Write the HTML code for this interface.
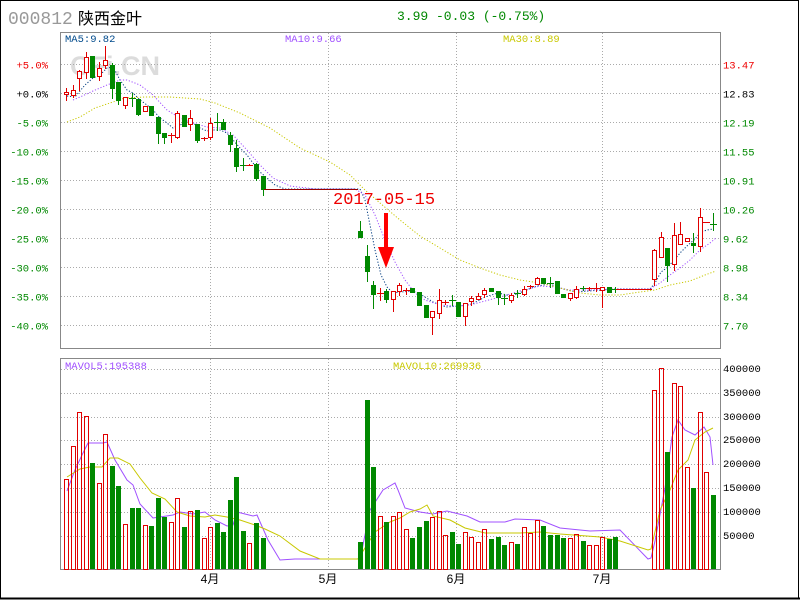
<!DOCTYPE html>
<html><head><meta charset="utf-8"><style>
html,body{margin:0;padding:0;background:#fff;}
#w{position:relative;width:800px;height:600px;overflow:hidden;}
svg{position:absolute;left:0;top:0;}
</style></head><body><div id="w">
<svg id="s" width="800" height="600" xmlns="http://www.w3.org/2000/svg" font-family="Liberation Mono, monospace" shape-rendering="crispEdges">
<rect x="0.5" y="0.5" width="798" height="598" fill="#fff" stroke="#000" stroke-width="1"/>
<line x1="0" y1="598.5" x2="800" y2="598.5" stroke="#000" stroke-width="2"/>
<text x="8" y="24" font-size="18" fill="#999">000812</text>
<text x="78" y="24" font-size="16" fill="#000" font-family="Liberation Sans, Noto Sans CJK SC, sans-serif">陕西金叶</text>
<text x="397" y="20" font-size="13" fill="#008800">3.99 -0.03 (-0.75%)</text>
<text x="70" y="75" font-size="27" font-weight="bold" fill="#dcdcdc" font-family="Liberation Sans, sans-serif">CFi.CN</text>
<g id="grid" stroke="#aaa" stroke-dasharray="1,2" stroke-width="1"></g>
<rect x="60.5" y="32.5" width="660" height="316" fill="none" stroke="#888"/>
<rect x="60.5" y="358.5" width="660" height="211" fill="none" stroke="#888"/>
<g id="lab" font-size="10.5"></g>
<text x="65" y="42" font-size="10.5" fill="#004a8c">MA5:9.82</text>
<text x="285" y="42" font-size="10.5" fill="#a050ff">MA10:9.66</text>
<text x="503" y="42" font-size="10.5" fill="#c8c800">MA30:8.89</text>
<text x="65" y="369" font-size="10.5" fill="#a050ff">MAVOL5:195388</text>
<text x="393" y="369" font-size="10.5" fill="#c8c800">MAVOL10:269936</text>
<g font-size="12" fill="#000" font-family="Liberation Sans, Noto Sans CJK SC, sans-serif" text-anchor="middle">
<text x="210" y="583">4月</text><text x="328" y="583">5月</text><text x="456" y="583">6月</text><text x="602" y="583">7月</text></g>
<g id="ma" fill="none" shape-rendering="auto"></g>
<g id="c"></g>
<line x1="264" y1="189.5" x2="358" y2="189.5" stroke="#900"/>
<line x1="616" y1="289.5" x2="652" y2="289.5" stroke="#d00"/>
<text x="333" y="204" font-size="17" fill="#e00" font-family="Liberation Mono, monospace">2017-05-15</text>
<rect x="384" y="213" width="4" height="36" fill="#f00"/>
<polygon points="378,247 394,247 386,268" fill="#f00" shape-rendering="auto"/>
</svg></div>
<script>
var NS="http://www.w3.org/2000/svg";
function el(p,t,a){var e=document.createElementNS(NS,t);for(var k in a)e.setAttribute(k,a[k]);document.getElementById(p).appendChild(e);return e;}
function tx(p,x,y,s,c,anc){var e=el(p,'text',{x:x,y:y,fill:c});if(anc)e.setAttribute('text-anchor',anc);e.textContent=s;}
for(var i=0;i<10;i++){var y=64.5+29*i;el('grid','line',{x1:61,y1:y,x2:720,y2:y});}
[369.5,393.5,417.5,440.5,464.5,488.5,512.5,536.5].forEach(function(y){el('grid','line',{x1:61,y1:y,x2:720,y2:y});});
[210.5,328.5,456.5,602.5].forEach(function(x){el('grid','line',{x1:x,y1:33,x2:x,y2:348});el('grid','line',{x1:x,y1:359,x2:x,y2:569});});
var pl=['+5.0%','+0.0%','-5.0%','-10.0%','-15.0%','-20.0%','-25.0%','-30.0%','-35.0%','-40.0%'];
var pr=['13.47','12.83','12.19','11.55','10.91','10.26','9.62','8.98','8.34','7.70'];
for(i=0;i<10;i++){var y=68.5+29*i;var c=i==0?'#e00':(i==1?'#000':'#008800');tx('lab',48,y,pl[i],c,'end');tx('lab',723,y,pr[i],c);}
var vl=['400000','350000','300000','250000','200000','150000','100000','50000'];
[372,396,420,443,467,491,515,539].forEach(function(y,i){tx('lab',723,y,vl[i],'#000');});
var R='#e00000',G='#008800';
var s1=[['r',92,94,88,100],['r',90,95,85,97],['r',71,78,70,90],['r',57,72,52,78],['g',56,77,56,77],['r',68,76,62,80],['r',60,65,46,68],['g',65,88,63,98],['g',82,100,82,104],['r',97,105,97,108],['g',98,99,93,106],['g',99,114,99,115],['r',106,111,106,111],['g',106,115,106,115],['g',117,133,117,143],['g',133,137,133,143],['r',135,136,133,142],['r',113,137,111,138],['g',115,126,115,126],['r',118,124,110,130],['g',124,140,124,142],['r',138,139,137,140],['r',123,137,118,139],['g',122,123,113,130],['g',122,129,119,129],['g',135,144,132,151],['g',148,166,140,171],['g',165,166,158,170],['r',165,166,164,166],['g',164,178,163,180],['g',176,189,176,195]];
var v1=[479,446,412,416,463,483,434,466,486,524,508,508,525,526,498,517,522,498,527,511,510,538,527,523,532,500,477,531,543,523,538];
var s2=[['g',231,237,221,237],['g',256,271,245,281],['g',285,294,281,308],['r',293,294,288,300],['g',291,299,289,302],['r',291,299,291,311],['r',285,291,283,295],['r',290,291,288,294],['g',288,292,288,292],['g',292,305,292,305],['g',305,317,305,317],['r',311,317,311,334],['r',300,313,289,318],['r',302,303,300,304],['g',300,301,295,305],['g',302,316,302,316],['r',303,316,303,325],['r',298,301,296,305],['r',296,299,293,299],['r',290,294,288,297],['g',288,291,288,291],['g',291,297,291,304],['g',298,299,294,304],['r',295,300,293,302],['g',293,294,290,297],['r',289,294,286,295],['r',286,287,285,288],['r',278,284,277,284],['g',278,283,278,283],['g',283,284,277,287],['g',281,293,281,293],['g',294,297,294,297],['r',293,298,293,300],['r',289,297,286,298],['g',288,289,286,290],['r',288,289,287,290],['r',288,289,283,291],['r',287,290,287,307],['g',287,292,287,292],['g',289,290,287,292]];
var v2=[542,400,467,516,522,516,512,529,538,527,521,517,511,535,532,544,532,537,542,529,539,537,545,542,544,527,533,520,526,535,535,538,538,534,541,545,545,537,539,537];
var s3=[['r',250,279,249,285],['r',237,257,232,257],['g',248,265,248,281],['r',235,264,223,270],['r',234,244,222,244],['r',238,241,238,241],['g',243,245,233,252],['r',217,246,208,251],['r',222,223,222,223],['g',224,225,213,230]];
var v3=[390,368,452,383,386,467,488,412,472,495];
function seg(st,S,V){for(var i=0;i<S.length;i++){var x=Math.round(st+6.55*i),d=S[i],col=d[0]=='r'?R:G;
 if(d[3]<d[1])el('c','line',{x1:x+2.5,y1:d[3],x2:x+2.5,y2:d[1],stroke:col});
 if(d[4]>d[2])el('c','line',{x1:x+2.5,y1:d[2],x2:x+2.5,y2:d[4]+1,stroke:col});
 if(d[2]-d[1]<=1){el('c','line',{x1:x-1,y1:d[1]+0.5,x2:x+6,y2:d[1]+0.5,stroke:col});}
 else if(d[0]=='r'){el('c','rect',{x:x+0.5,y:d[1]+0.5,width:4,height:d[2]-d[1],fill:'#fff',stroke:col});}
 else{el('c','rect',{x:x,y:d[1],width:5,height:d[2]-d[1]+1,fill:col});}
 var vt=V[i];
 if(d[0]=='r'){el('c','rect',{x:x+0.5,y:vt+0.5,width:4,height:569-vt,fill:'none',stroke:col});}
 else{el('c','rect',{x:x,y:vt,width:5,height:569-vt,fill:col});}}}
seg(64,s1,v1);seg(358,s2,v2);seg(652,s3,v3);
function pl2(pts,col,dash){var e=el('ma','polyline',{points:pts,stroke:col,'stroke-width':1});if(dash)e.setAttribute('stroke-dasharray','1.2,1.8');}
pl2("67,96 75,97 85,85 93,78 100,75 107,68 113,67 120,80 127,90 133,93 140,100 147,105 153,110 160,118 167,123 173,128 180,125 187,122 193,123 200,128 207,131 213,130 220,130 227,133 233,140 240,148 247,155 253,163 260,172 267,178 275,185 285,189 360,189 365,200 370,225 375,250 381,275 387,287 393,293 400,292 413,291 420,294 433,302 446,307 460,306 472,304 485,297 498,293 512,296 524,291 537,286 550,284 563,289 576,292 589,291 602,290 616,289 650,289 655,283 661,272 668,267 674,260 681,252 688,245 694,240 701,232 707,230 713,229",'#003c80',1);
pl2("73,100 80,97 93,91 107,85 120,80 127,80 140,85 153,95 167,110 180,118 193,123 207,127 220,128 233,135 247,150 260,165 273,178 290,186 315,189 355,189 365,195 375,215 385,240 395,262 405,280 415,293 425,300 440,305 455,306 470,305 485,301 500,297 520,291 540,286 555,287 570,290 590,290 615,289 650,289 660,283 670,275 680,268 690,260 700,250 710,243 716,238",'#a050ff',1);
pl2("67,122 80,117 95,108 110,103 125,98 145,97 170,97 200,99 215,103 240,113 270,128 300,148 330,162 350,175 365,190 380,203 400,220 420,236 440,248 460,260 480,268 500,275 520,280 540,283 560,288 580,293 600,295 620,295 640,292 655,290 670,285 690,281 705,275 716,271",'#c8c800',1);
pl2("67,491 75,470 82,455 88,443 93,443 103,443 107,442 115,460 127,480 133,485 140,504 153,518 160,517 173,515 180,512 193,514 205,512 215,520 227,526 233,525 237,512 253,516 257,515 268,540 280,560 295,559 322,559 358,559 362,550 370,510 383,490 395,483 398,490 405,508 420,512 433,514 447,511 467,516 480,522 505,522 515,519 540,520 560,528 590,531 620,530 648,559 651,558 655,541 665,488 672,437 678,420 685,430 695,435 704,427 710,437 713,465",'#a050ff',0);
pl2("67,477 80,469 90,467 102,467 110,458 118,458 130,464 140,478 152,493 165,499 177,512 190,516 205,517 215,515 227,517 240,520 255,525 265,529 280,536 300,551 320,559 358,559 365,548 375,532 390,522 400,518 410,512 420,509 427,505 433,516 450,520 465,528 485,533 500,533 520,533 540,532 560,534 600,537 620,541 648,550 651,549 660,510 670,490 678,470 688,460 695,440 705,432 713,428",'#c8c800',0);
</script>
</body></html>
